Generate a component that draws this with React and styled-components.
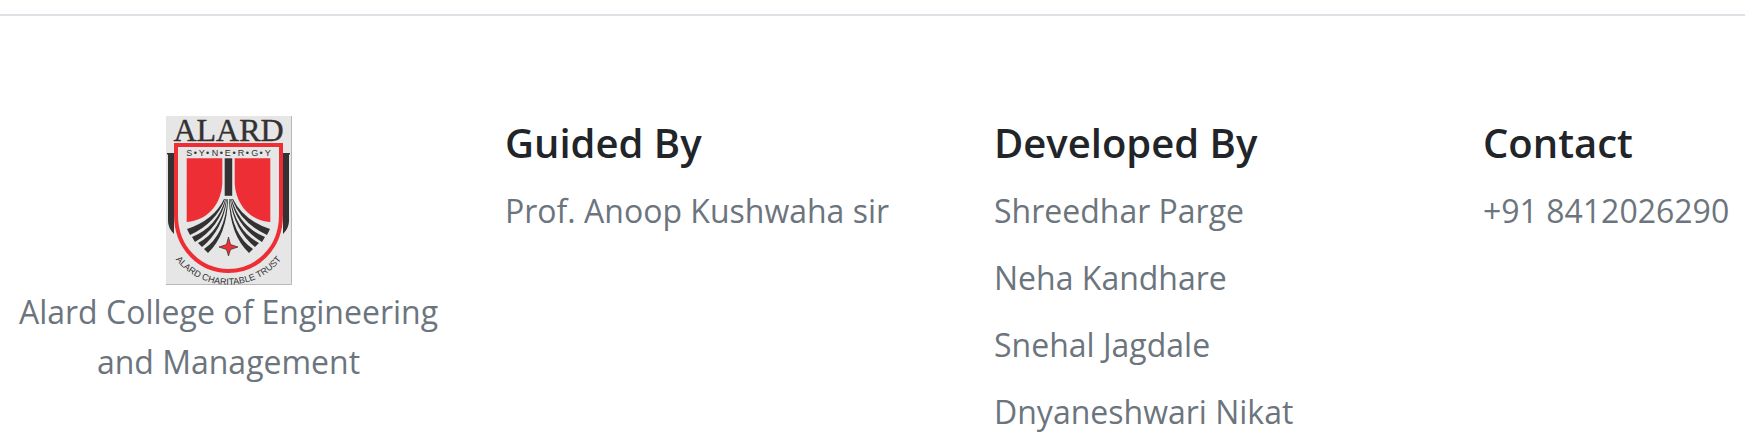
import React from "react";
import styled, { createGlobalStyle } from "styled-components";

const GlobalStyle = createGlobalStyle`
  * { box-sizing: border-box; }
  body {
    margin: 0;
    background: #fff;
    color: #212529;
    font-family: "Segoe UI", "Open Sans", sans-serif;
    font-size: 32px;
    line-height: 50px;
  }
`;

const Footer = styled.footer`
  margin-top: 14px;
  padding: 100px 0 0 16px;
  border-top: 2px solid #dee2e6;
`;

const Columns = styled.div`
  display: grid;
  grid-template-columns: repeat(3, 1fr) 262px;
  column-gap: 64px;
`;

const Brand = styled.div`
  display: flex;
  flex-direction: column;
  align-items: center;
  gap: 2px;
  color: #6c757d;
  text-align: center;
`;

const Crest = styled.svg`
  display: block;
  width: 126px;
  height: 169px;
`;

const BrandName = styled.p`
  margin: 0;
`;

const Column = styled.section`
  white-space: nowrap;
`;

const Heading = styled.h5`
  margin: 2px 0 18px;
  font-size: 40px;
  font-weight: 600;
  line-height: 50px;
`;

const List = styled.ul`
  display: flex;
  flex-direction: column;
  gap: 17px;
  margin: 0;
  padding: 0;
  list-style: none;
  color: #6c757d;
`;

const groups = [
  { title: "Guided By", items: ["Prof. Anoop Kushwaha sir"] },
  {
    title: "Developed By",
    items: ["Shreedhar Parge", "Neha Kandhare", "Snehal Jagdale", "Dnyaneshwari Nikat"],
  },
  { title: "Contact", items: ["+91 8412026290"] },
];

function CrestHalf() {
  return (
    <>
      <path d="M1 37H8V118Q2 112 2 105V39L1 38Z" fill="#333132" />
      <path d="M20.7 42.3H56.3V68C55 86 44 104 20.7 106Z" fill="#ed2f35" />
      <g fill="#333132">
        <path d="M58 83Q48 104 21 113L24 119Q50 107 59 83Z" />
        <path d="M59.4 83Q51 111 26 121L29 126Q54 111 60 83Z" />
        <path d="M60.4 83Q55 115 32 127L36 131Q57 114 61 83Z" />
        <path d="M61.4 83Q59 119 38 133L42 137Q61 119 62 83Z" />
      </g>
    </>
  );
}

function AlardCrest() {
  return (
    <Crest viewBox="0 0 126 169" role="img" aria-label="Alard Charitable Trust crest">
      <rect width="126" height="169" fill="#e6e6e6" />
      <path d="M125.500 0V168.500H0" fill="none" stroke="#b8b8b8" />
      <text x="62.500" y="25" textAnchor="middle" fontFamily="Liberation Serif, serif" fontSize="32" fill="#333132" stroke="#333132" strokeWidth="0.400">ALARD</text>
      <CrestHalf />
      <g transform="matrix(-1 0 0 1 125 0)"><CrestHalf /></g>
      <rect x="58.700" y="42.300" width="7.500" height="37.500" fill="#333132" />
      <path d="M10 29H115V99C115 133 90 155 62.500 155S10 133 10 99Z" fill="none" stroke="#ed2f35" strokeWidth="4" />
      <text
        x="23.3 29.3 35.7 41.7 49 55.3 61.7 68 75 81.3 88.7 95 101.7"
        y="40" textAnchor="middle" fontFamily="Liberation Sans, sans-serif" fontSize="9" fill="#333132"
      >S•Y•N•E•R•G•Y</text>
      <path d="M62.500 121L64.500 128.500L72 131L64.500 133.500L62.500 140L60.500 133.500L53 131L60.500 128.500Z" fill="#ed2f35" stroke="#333132" strokeWidth="0.700" />
      <path id="motto" d="M5 137A68 68 0 0 0 120 137" fill="none" />
      <text fontFamily="Liberation Sans Narrow, Liberation Sans, sans-serif" fontSize="9" fill="#333132">
        <textPath href="#motto" startOffset="50%" textAnchor="middle">ALARD CHARITABLE TRUST</textPath>
      </text>
    </Crest>
  );
}

export default function App() {
  return (
    <>
      <GlobalStyle />
      <Footer>
        <Columns>
          <Brand>
            <AlardCrest />
            <BrandName>
              Alard College of Engineering
              <br />
              and Management
            </BrandName>
          </Brand>
          {groups.map(({ title, items }) => (
            <Column key={title}>
              <Heading>{title}</Heading>
              <List>
                {items.map((item) => <li key={item}>{item}</li>)}
              </List>
            </Column>
          ))}
        </Columns>
      </Footer>
    </>
  );
}
